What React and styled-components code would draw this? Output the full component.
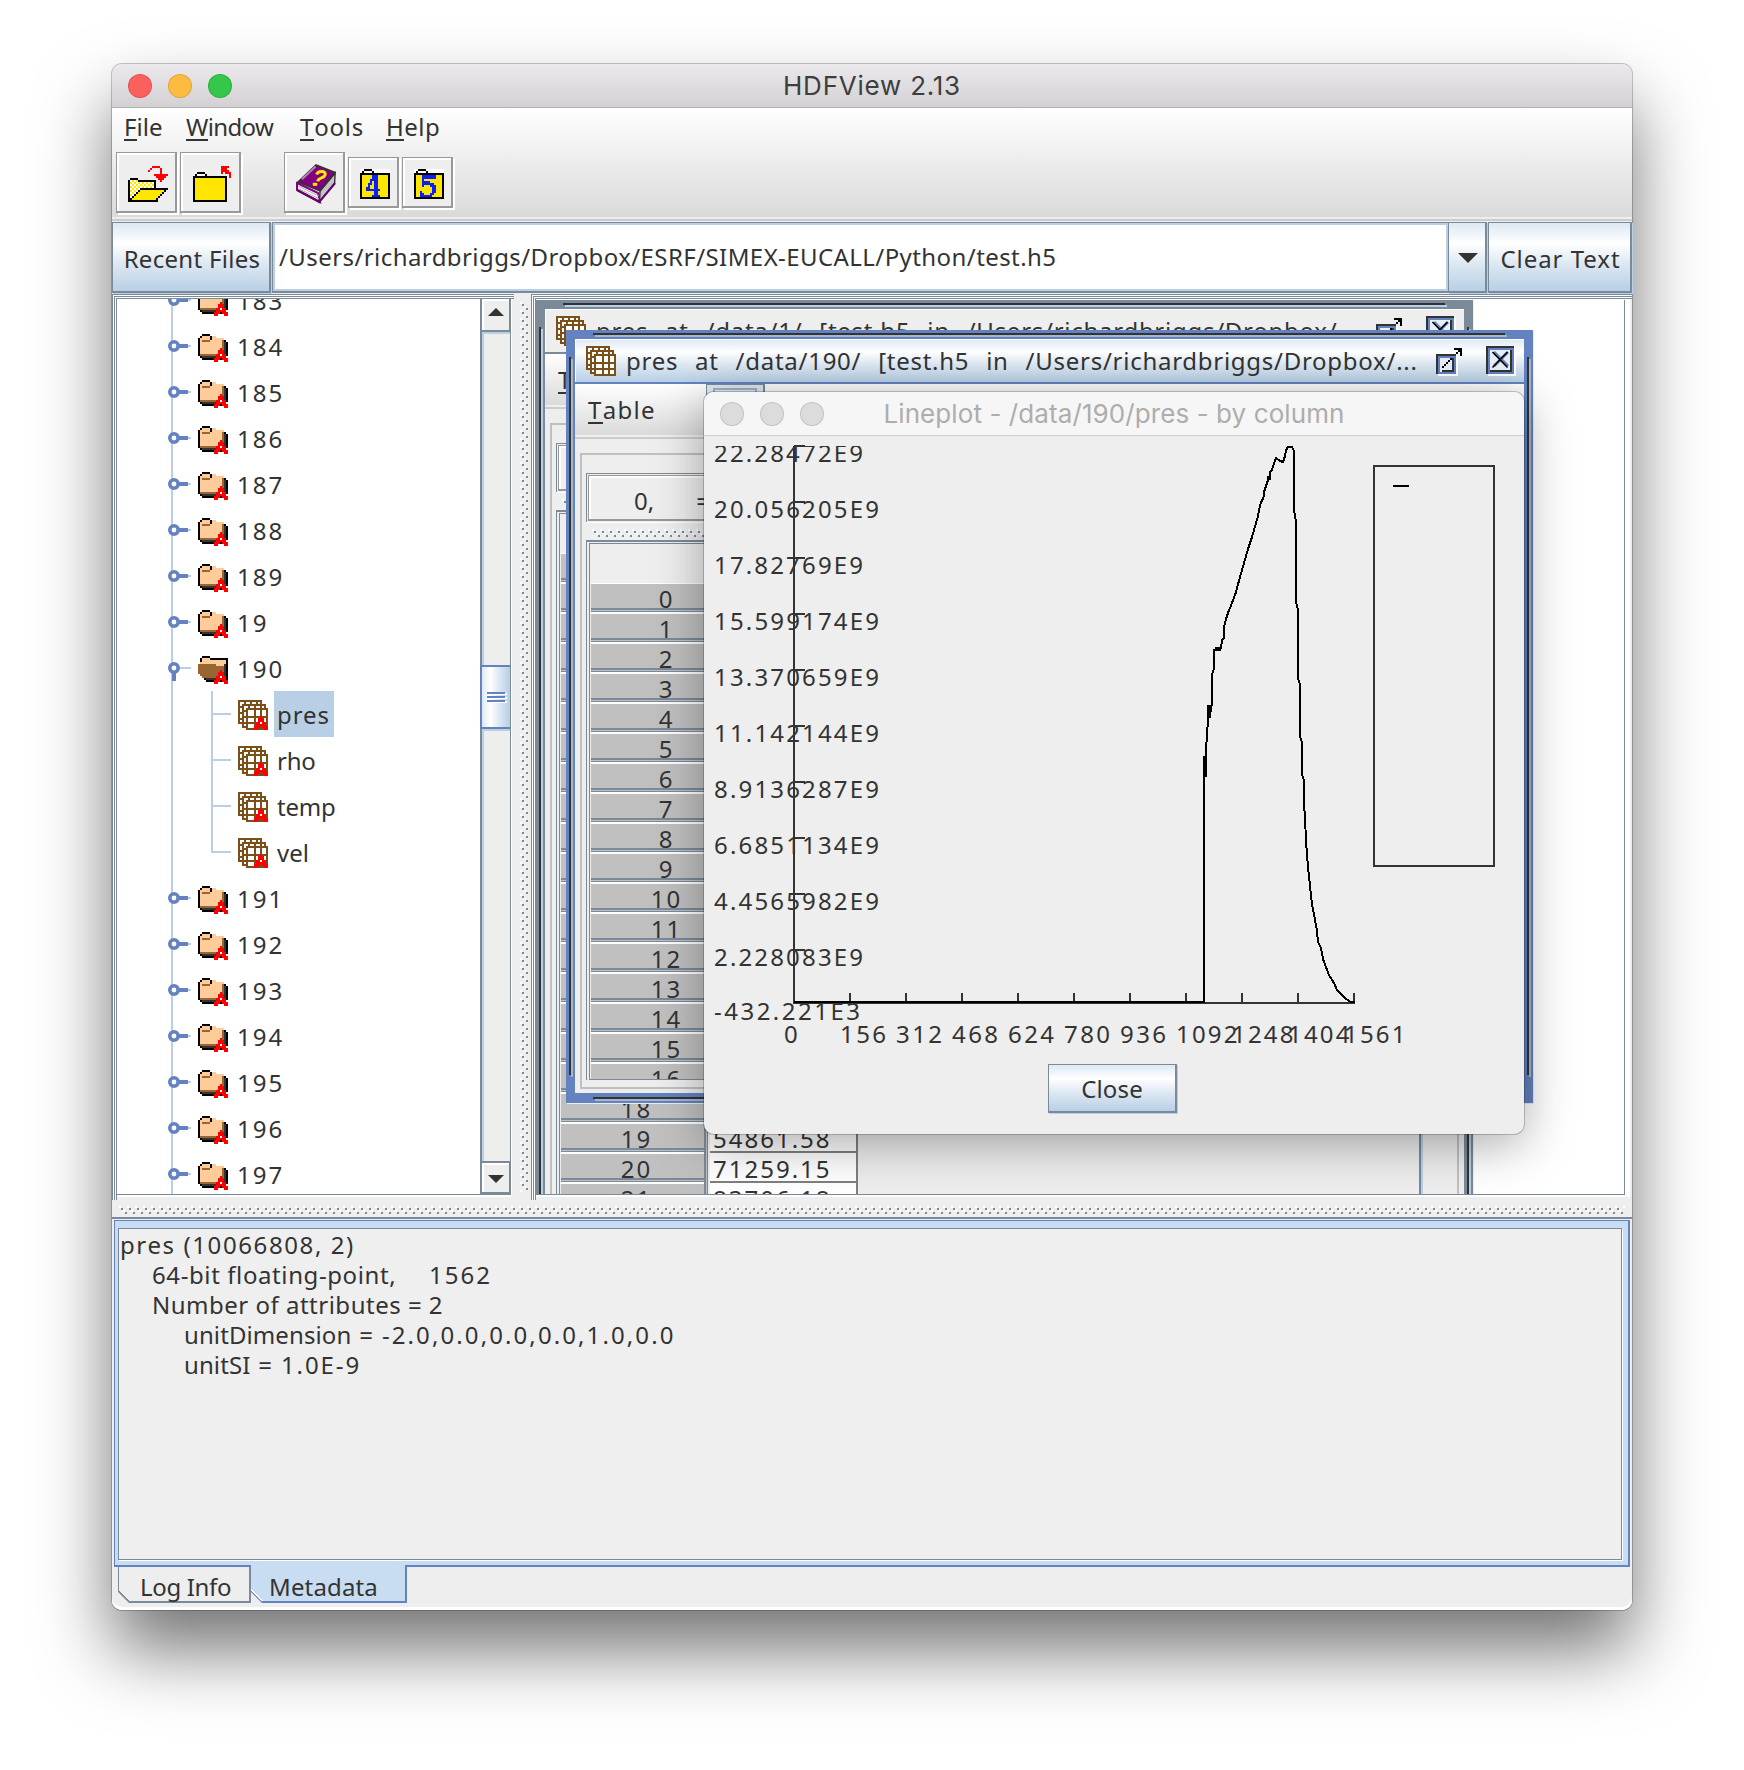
import React from "react";
import styled, { createGlobalStyle, css } from "styled-components";

const GRAY = "#7a8a99";
const BLUE = "#6382bf";
const LIGHT = "#b8cfe5";
const INK = "#333333";
const DIGITS = 2;

const Global = createGlobalStyle`
  body { margin: 0; background: #fff; }
  * { box-sizing: border-box; }
`;

const Text = styled.span`
  white-space: pre;
  letter-spacing: ${(p) => p.$ls || 0}px;
  word-spacing: ${(p) => p.$ws || 0}px;
`;
const Mnemonic = styled.span`
  display: inline-block;
  line-height: 28px;
  box-shadow: inset 0 -2px 0 ${INK};
`;
function Underlined({ ls, children }) {
  return (
    <Text $ls={ls}>
      <Mnemonic>{children[0]}</Mnemonic>
      {children.slice(1)}
    </Text>
  );
}

const Page = styled.div`
  width: 1744px;
  height: 1770px;
  padding: 64px 112px 0;
  overflow: hidden;
  font-family: "Noto Sans", sans-serif;
  font-size: 24px;
  color: ${INK};
`;
const Window = styled.div`
  position: relative;
  width: 1520px;
  height: 1546px;
  display: flex;
  flex-direction: column;
  border-radius: 10px;
  background: #eee;
  box-shadow: 0 0 0 1px rgba(0, 0, 0, 0.22), 0 40px 72px rgba(0, 0, 0, 0.55);
`;
const TitleBar = styled.div`
  height: 44px;
  flex: none;
  display: grid;
  grid-template-columns: 110px 1fr 110px;
  align-items: center;
  padding: 0 16px;
  border-radius: 10px 10px 0 0;
  border-bottom: 1px solid ${(p) => (p.$active ? "#b4b0b4" : "#d0d0d0")};
  background: ${(p) => (p.$active ? "linear-gradient(#ebe9eb, #d3d1d3)" : "#f6f6f6")};
  color: ${(p) => (p.$active ? "#3e3e3e" : "#adadad")};
  font-family: Inter, "Liberation Sans", sans-serif;
  font-size: 26px;
  line-height: 44px;
  text-align: center;
`;
const Lights = styled.div`
  display: flex;
  gap: 16px;
`;
const Light = styled.i`
  width: 24px;
  height: 24px;
  border-radius: 50%;
  background: ${(p) => p.$c};
  border: 1px solid rgba(0, 0, 0, 0.12);
`;

const Head = styled.div`
  height: 114px;
  flex: none;
  background: linear-gradient(#fff, #dadada 109px, #eee 109px, #eee 111px, #ccc 111px, #ccc 113px, #eee 113px);
`;
const Menu = styled.div`
  display: flex;
  line-height: 38px;
  height: 38px;
  padding-left: 12px;
`;
const MenuItem = styled.div`
  width: ${(p) => p.$w}px;
`;
const Tools = styled.div`
  display: flex;
  align-items: center;
  height: 61px;
  margin: 6px 0 0 4px;
  gap: 3px;
`;
const ToolButton = styled.div`
  width: ${(p) => p.$s}px;
  height: ${(p) => p.$s}px;
  margin-left: ${(p) => p.$ml || 0}px;
  padding: 4px 0 0 4px;
  display: flex;
  align-items: center;
  justify-content: center;
  background: #eee;
  border: solid #999;
  border-width: 1px 2px 2px 1px;
  box-shadow: inset 2px 2px 0 #fff, 2px 2px 0 #fff;
`;

const metal = css`
  background: linear-gradient(#dde8f3, #fff 30%, #dde8f3 60%, ${LIGHT});
  border: solid ${GRAY};
  border-width: 1px 2px 2px 1px;
  box-shadow: 1px 1px 0 ${LIGHT};
`;
const PathRow = styled.div`
  display: flex;
  height: 72px;
  flex: none;
  gap: 1px;
`;
const MetalButton = styled.div`
  ${metal}
  width: ${(p) => p.$w}px;
  height: ${(p) => p.$h}px;
  margin-right: ${(p) => p.$mr || 0}px;
  flex: none;
  display: flex;
  align-items: center;
  justify-content: center;
  padding: ${(p) => p.$pt || 0}px 0 0 ${(p) => p.$pl || 0}px;
`;
const PathField = styled.div`
  flex: 1;
  height: 71px;
  margin-right: -1px;
  padding: 0 6px;
  background: #fff;
  border: solid ${GRAY};
  border-width: 1px 0 2px 1px;
  box-shadow: inset 2px 2px 0 ${LIGHT}, inset -2px -2px 0 ${LIGHT};
  line-height: 68px;
`;

const Split = styled.div`
  display: flex;
  height: 906px;
  flex: none;
`;
const nest = css`
  box-shadow: inset 1px 1px 0 ${GRAY}, inset 2px 2px 0 #fff, inset 3px 3px 0 ${GRAY}, inset 4px 4px 0 #fff,
    inset 5px 5px 0 ${GRAY}, inset -2px -3px 0 #eee;
`;
const TreePanel = styled.div`
  ${nest}
  width: 402px;
  padding: 5px 3px 5px 5px;
  background: #fff;
`;
const TreeInner = styled.div`
  display: flex;
  height: 896px;
  border: solid ${GRAY};
  border-width: 0 1px 1px 0;
`;
const TreeView = styled.div`
  flex: 1;
  overflow: hidden;
`;
const TreeList = styled.div`
  margin-top: -22px;
`;
const TreeRow = styled.div`
  display: flex;
  align-items: center;
  height: 46px;
  line-height: 48px;
  padding-left: ${(p) => (p.$child ? 96 : 51)}px;
  background: linear-gradient(${LIGHT}, ${LIGHT}) 54px 0 / 2px 100% no-repeat
    ${(p) => p.$child && `, linear-gradient(${LIGHT}, ${LIGHT}) 94px 0 / 2px ${p.$last ? "24px" : "100%"} no-repeat`};
`;
const Twig = styled.i`
  width: 18px;
  height: 2px;
  margin-right: 7px;
  background: ${LIGHT};
`;
const RowLabel = styled.span`
  height: 46px;
  margin-left: 6px;
  padding: 0 3px;
  background: ${(p) => (p.$on ? LIGHT : "transparent")};
  min-width: 60px;
`;
const IconBox = styled.span`
  display: flex;
  margin-left: ${(p) => p.$ml || 0}px;
  padding-top: ${(p) => p.$pt || 0}px;
`;

const Bar = styled.div`
  width: 30px;
  flex: none;
  display: flex;
  flex-direction: column;
  border-left: 2px solid ${GRAY};
  box-shadow: inset 2px 0 0 ${LIGHT};
  background: #eee;
`;
const BarButton = styled.div`
  height: 33px;
  display: flex;
  align-items: center;
  justify-content: center;
  padding: ${(p) => (p.$down ? "3px 0 0" : "0 0 4px")};
  border: solid ${GRAY};
  border-width: ${(p) => (p.$down ? "2px 1px 2px 0" : "0 1px 2px 0")};
  box-shadow: inset 2px 2px 0 #fff;
  background: #eee;
`;
const BarGap = styled.div`
  height: ${(p) => p.$h}px;
  box-shadow: inset 0 2px 0 ${LIGHT};
`;
const Thumb = styled.div`
  height: 64px;
  margin-left: -2px;
  display: flex;
  flex-direction: column;
  align-items: center;
  justify-content: center;
  gap: 2px;
  border: solid ${BLUE};
  border-width: 2px 0 2px 2px;
  background: linear-gradient(90deg, #dde8f3, #fff 30%, #dde8f3 60%, ${LIGHT});
`;
const Grip = styled.i`
  width: 18px;
  height: 2px;
  background: ${BLUE};
  box-shadow: 2px 1px 0 #fff;
`;
const VSplit = styled.div`
  width: 17px;
  padding: 8px 0 6px 6px;
`;
const HSplit = styled.div`
  height: ${(p) => p.$h}px;
  padding: ${(p) => p.$pad};
  flex: none;
`;

const Desktop = styled.div`
  ${nest}
  flex: 1;
  padding: 6px 7px 5px 5px;
  background: #fff;
`;
const Canvas = styled.div`
  position: relative;
  height: 895px;
  overflow: hidden;
  border: solid ${GRAY};
  border-width: 0 1px 1px 0;
`;
const FrameBox = styled.div`
  position: absolute;
  left: ${(p) => p.$x}px;
  top: ${(p) => p.$y}px;
  width: ${(p) => p.$w}px;
  height: ${(p) => p.$h}px;
  padding: 9px 9px 10px;
  --d: linear-gradient(${INK}, ${INK});
  --l: linear-gradient(${(p) => (p.$active ? "#a3b8cc, #a3b8cc" : `${LIGHT}, ${LIGHT}`)});
  --n: calc(100% - 55px);
  background: var(--d) left 27px top 3px / var(--n) 2px no-repeat, var(--l) left 29px top 5px / var(--n) 2px no-repeat,
    var(--d) left 3px top 27px / 2px var(--n) no-repeat, var(--l) left 5px top 29px / 2px var(--n) no-repeat,
    var(--d) right 4px top 27px / 2px var(--n) no-repeat, var(--l) right 2px top 29px / 2px var(--n) no-repeat,
    var(--d) left 27px bottom 4px / var(--n) 2px no-repeat, var(--l) left 29px bottom 2px / var(--n) 2px no-repeat,
    linear-gradient(${(p) => (p.$active ? `${BLUE}, ${BLUE}` : `${GRAY}, ${GRAY}`)});
  box-shadow: 1px 1px 0 #eee;
`;
const FrameInner = styled.div`
  display: flex;
  flex-direction: column;
  height: 100%;
  background: #eee;
`;
const FrameTitle = styled.div`
  height: 45px;
  flex: none;
  display: flex;
  align-items: center;
  padding: 0 8px 0 11px;
  border-bottom: 2px solid ${(p) => (p.$active ? BLUE : GRAY)};
  background: ${(p) => (p.$active ? `linear-gradient(#dde8f3, #fff 30%, #dde8f3 60%, ${LIGHT})` : "#eee")};
  box-shadow: inset 1px 1px 0 #fff, 0 1px 0 ${LIGHT};
`;
const FrameName = styled.span`
  flex: 1;
  margin-left: 10px;
  line-height: 40px;
`;
const FrameMenu = styled.div`
  height: 56px;
  flex: none;
  display: flex;
  padding-left: 13px;
  line-height: 51px;
  background: linear-gradient(#fff, #dadada 51px, #eee 51px, #eee 53px, #ccc 53px, #ccc 55px, #eee 55px);
`;
const ChartTool = styled.div`
  width: 59px;
  height: 50px;
  margin-left: 50px;
  padding: 3px 6px;
  border: solid ${GRAY};
  border-width: 1px 2px 2px 1px;
  background: #dde8f3;
  &::before {
    content: "";
    display: block;
    height: 40px;
    border: 2px solid #9fb0c6;
  }
`;
const FrameBody = styled.div`
  flex: 1;
  min-height: 0;
  padding: 13px 5px 4px;
`;
const Group = styled.div`
  display: flex;
  flex-direction: column;
  height: 100%;
  padding: 18px 8px 7px 4px;
  border: 2px solid #c0c0c0;
`;
const CellBox = styled.div`
  height: 49px;
  flex: none;
  padding: 1px;
  border: solid ${GRAY};
  border-width: 1px 0 0 1px;
  box-shadow: 0 1px 0 #fff;
`;
const CellInner = styled.div`
  height: 46px;
  padding-left: 45px;
  line-height: 49px;
  border: solid #999;
  border-width: 1px 1px 2px 1px;
  box-shadow: inset 2px 2px 0 #fff;
  display: flex;
`;
const CellEq = styled.span`
  margin-left: 42px;
`;
const TableBox = styled.div`
  flex: 1;
  min-height: 0;
  display: flex;
  padding: 1px 0 0 2px;
  border: solid ${GRAY};
  border-width: 2px 0 0 1px;
`;
const TableView = styled.div`
  flex: 1;
  display: flex;
  overflow: hidden;
  border: solid ${GRAY};
  border-width: 1px 0 1px 1px;
`;
const RowHead = styled.div`
  width: 148px;
  padding-top: 39px;
`;
const HeadCell = styled.div`
  height: 30px;
  line-height: 32px;
  text-align: center;
  margin-left: 1px;
  padding-left: 4px;
  background: linear-gradient(
    #fff 1px, #c0c0c0 1px, #c0c0c0 25px, ${GRAY} 25px, ${GRAY} 27px,
    #c0c0c0 27px, #c0c0c0 28px, ${GRAY} 28px, ${GRAY} 29px, #fff 29px
  );
  box-shadow: inset -1px 0 0 ${GRAY}, inset -2px 0 0 #c0c0c0, inset -4px 0 0 ${GRAY};
`;
const DataCol = styled.div`
  width: 150px;
  padding-top: ${(p) => 39 + 30 * p.$skip}px;
`;
const DataCell = styled.div`
  height: 30px;
  line-height: 32px;
  padding-left: 3px;
  margin-left: 2px;
  background: #fff;
  border: solid #7f7f7f;
  border-width: 0 2px 2px 0;
`;

const Tabs = styled.div`
  flex: 1;
  display: flex;
  flex-direction: column;
  border-top: 2px solid ${GRAY};
  padding: 1px 2px 3px;
  box-shadow: inset 0 -3px 0 #fff;
  border-radius: 0 0 10px 10px;
  background: #eee;
`;
const TabPane = styled.div`
  height: 347px;
  flex: none;
  padding: 7px 6px 4px 3px;
  background: #c8ddf2;
  border: solid ${BLUE};
  border-width: 1px 2px 2px 1px;
`;
const MetaText = styled.div`
  height: 332px;
  padding: 1px 1px 0;
  background: #efefef;
  border: 1px solid ${GRAY};
  box-shadow: 1px 1px 0 #fff;
  line-height: 30px;
`;
const Line = styled.div`
  height: 30px;
  padding-left: ${(p) => p.$in * 32}px;
`;
const Value = styled(Text)`
  margin-left: ${(p) => p.$ml}px;
`;
const TabRow = styled.div`
  display: flex;
  padding-left: 4px;
`;
const Tab = styled.div`
  width: ${(p) => p.$w}px;
  height: ${(p) => (p.$on ? 38 : 36)}px;
  line-height: 40px;
  margin-top: ${(p) => (p.$on ? -2 : 0)}px;
  padding: ${(p) => (p.$on ? 2 : 0)}px 0 0 ${(p) => p.$pl}px;
  clip-path: polygon(0 0, 100% 0, 100% 100%, 11px 100%, 0 calc(100% - 11px));
  border: solid ${(p) => (p.$on ? BLUE : GRAY)};
  border-width: 0 2px 2px ${(p) => (p.$on ? 0 : 1)}px;
  background: linear-gradient(
    45deg,
    ${(p) => (p.$on ? BLUE : GRAY)} 7.3px,
    ${(p) => (p.$on ? "#fff 7.4px, #fff 9px, #c8ddf2 9px" : "#eee 7.4px")}
  );
`;

const Plot = styled.div`
  position: absolute;
  left: 592px;
  top: 328px;
  width: 820px;
  height: 742px;
  display: flex;
  flex-direction: column;
  align-items: center;
  border-radius: 10px;
  background: #eee;
  box-shadow: 0 0 0 1px rgba(0, 0, 0, 0.2), 0 10px 50px rgba(0, 0, 0, 0.34);
  ${TitleBar} {
    width: 100%;
  }
`;
const ChartSvg = styled.svg`
  display: block;
  flex: none;
`;

const PAL = {
  K: "#000", p: "#ffcc99", b: "#996633", d: "#333", r: "#f00", w: "#fff", y: "#ffe600", B: "#0a1eff",
};
function Cells({ rows, dx = 0, dy = 0 }) {
  return rows.map((row, y) =>
    [...row].map(
      (ch, x) => PAL[ch] && <rect key={`${x}-${y}`} x={x + dx} y={y + dy} width="1" height="1" fill={PAL[ch]} />
    )
  );
}
function Pixels({ rows, attr }) {
  const w = rows[0].length;
  const h = rows.length;
  return (
    <svg width={w * 2} height={h * 2} viewBox={`0 0 ${w} ${h}`} shapeRendering="crispEdges">
      <Cells rows={rows} />
      {attr && <Cells rows={ATTR} dx={8} dy={7} />}
    </svg>
  );
}
const ATTR = ["...r...", "..rrr..", "..rrr..", ".rrwrr.", ".rrrrr.", "rrr.rrr", "rr...rr"];
const CLOSED = [
  "..KKKK.........", ".KppppKpp......", "KpppppKpppppp..", "KpbbbbppppppbK.", "KpppppppppppbdK", "KpppppppppppbdK",
  "KpppppppppppbdK", "KpppppppppppbdK", "KpppppppppppbdK", "KpppppppppppbdK", "KbbbbbbbbbbbddK", ".KdddddddddddK.",
  "..KKKKKKKKKKK..", "...............",
];
const OPENED = [
  "..KKKK.........", ".KppppKKKKKKKKK", ".KppppppppppppK", ".pppppppppppppK", "bbbbbbbbbppppdK", "bbbbbbbbbbbbbdK",
  "bbbbbbbbbbbbbdK", "bbbbbbbbbbbbbdK", "bbbbbbbbbbbbbdK", ".bbbbbbbbbbbbdK", "..bbbbbbbbbbddK", "...KddddddddddK",
  "....KKKKKKKKKKK", "...............",
];
const OPENFILE = [
  "............rrrr....", "...........r....r...", "..........r.....r...", "................r...", ".............rrrrrrr",
  "..............rrrrr.", ".KKKK..........rrr..", "KwywyKKKKKKKKK..r...", "KywywywywywywK......", "KwywywywywywyK......",
  "KywywywywywywK......", "KwywywKKKKKKKKKKKKKK", "KywywKyyyyyyyyyyyyK.", "KwywKyyyyyyyyyyyyK..", "KywKyyyyyyyyyyyyK...",
  "KwKyyyyyyyyyyyyK....", "KKyyyyyyyyyyyyK.....", "KKKKKKKKKKKKKKK.....",
];
const CLOSEFILE = [
  "..............rrrr.", "..............rrr..", "..............rrrr.", "..KKKK........r.rrr", ".KwwwwK...........r",
  "KKKKKKKKKKKKKKKKK.r", ...Array(11).fill("KyyyyyyyyyyyyyyyK.."), "KKKKKKKKKKKKKKKKK..",
];
const folder = (digit) => {
  const base = ["wwKKKKwwwwwwwww", "wKwwwwKwwwwwwww", "KKKKKKKKKKKKKKK", ...Array(11).fill("KyyyyyyyyyyyyyK"), "KKKKKKKKKKKKKKK"];
  return base.map((r, y) => [...r].map((c, x) => (digit[y - 3] && digit[y - 3][x] === "#" ? "B" : c)).join(""));
};
const FOUR = folder([
  "......###", "......###", ".....####", ".....#.##", "....##.##", "....#..##", "...##..##", "...#######", ".......##", ".......##", "......####",
]);
const FIVE = folder([
  "....#######", "....#######", "....#", "....####", "....######", "....#...###", ".........##", ".........##", "...#.....##", "...##...##", "...######",
]);

function Book() {
  return (
    <svg width="40" height="40" viewBox="0 0 20 20">
      <path d="M.5 9.5 11 14.5 12 19 .5 13z" fill="#fff" stroke="#80007f" strokeWidth="1" />
      <path d="M1 11 11.5 16M1.5 12.4 11.5 17.4" stroke="#aaa" strokeWidth=".5" />
      <path d="M12 13.5 19.6 4.5 19.3 9.5 11.8 18.8z" fill="#c4c4c4" stroke="#333" strokeWidth=".7" />
      <path d="M.5 13 11.6 19 19.6 9.6" fill="none" stroke="#66006a" strokeWidth="1" />
      <path d="M1 9 10 .5 19.5 4.2 12 13.4z" fill="#800080" stroke="#333" strokeWidth=".8" />
      <path d="M3 7.6 9.8 1.2" stroke="#b080b0" strokeWidth="1" />
      <path d="M10.3 5.2C11 3.2 15.2 3.2 14.6 5.4 14 7.3 11.4 6.6 10.8 8.6" fill="none" stroke="#ffe600" strokeWidth="1.5" />
      <path d="M8.4 9.4h2.2v1.5H8.4z" fill="#ffe600" />
    </svg>
  );
}
function GridLayer({ from, to, lines }) {
  const n = to - from + 1;
  return (
    <g fill="#7b4f18">
      <rect x={from} y={from} width={n} height={n} fill="#fff" />
      {lines.map((v) => (
        <g key={v}>
          <rect x={v} y={from} width="1" height={n} />
          <rect x={from} y={v} width={n} height="1" />
        </g>
      ))}
    </g>
  );
}
function Grid({ attr }) {
  return (
    <svg width="30" height="30" viewBox="0 0 15 15" shapeRendering="crispEdges">
      <GridLayer from={0} to={11} lines={[0, 3, 6, 9, 11]} />
      <GridLayer from={2} to={13} lines={[2, 5, 8, 11, 13]} />
      <GridLayer from={4} to={14} lines={[4, 8, 11, 14]} />
      {attr && <Cells rows={ATTR} dx={8} dy={8} />}
    </svg>
  );
}
function Handle({ open }) {
  return (
    <svg width="24" height="28" viewBox="0 0 24 28">
      <path d="M12 13h11v2H12z" fill={LIGHT} />
      <path d={open ? "M4 16h4v11H4z" : "M10 12h10v4H10z"} fill={BLUE} />
      <circle cx="6" cy="14" r="4.2" fill="#fff" stroke={BLUE} strokeWidth="3.6" />
    </svg>
  );
}
const Arrow = ({ up, w = 16, h = 8 }) => (
  <svg width={w} height={h} viewBox="0 0 16 8" preserveAspectRatio="none">
    <path d={up ? "M8 0 16 8H0z" : "M0 0h16L8 8z"} fill={INK} />
  </svg>
);
const BumpSvg = styled.svg`
  display: block;
`;
function Bumps({ w, h }) {
  const id = `bumps${w}x${h}`;
  return (
    <BumpSvg width={w} height={h} shapeRendering="crispEdges">
      <pattern id={id} width="8" height="8" patternUnits="userSpaceOnUse">
        <path d="M0 0h2v2H0zM4 4h2v2H4z" fill="#fff" />
        <path d="M2 2h2v2H2zM6 6h2v2H6z" fill={GRAY} />
      </pattern>
      <rect width={w} height={h} fill={`url(#${id})`} />
    </BumpSvg>
  );
}
const ButtonsSvg = styled.svg`
  margin-top: 3px;
`;
function FrameButtons() {
  return (
    <ButtonsSvg width="80" height="32" viewBox="0 0 80 32" shapeRendering="crispEdges">
      <path d="M2 10h20v20H2z" fill="#fff" />
      <path d="M0 8h20v20H0z" fill={BLUE} />
      <path d="M0 8h20v2H0zM0 8h2v20H0z" fill={INK} />
      <path d="M4 12h14v14H4z" fill="#e8eff7" />
      <path d="M6 24h12v2H6zM16 12h2v14h-2z" fill={INK} />
      <path d="M6 22h2v-2h2v-2h2v-2h2v-2h2v-2h-2v2h-2v2h-2v2H8v2H6z" fill="#000" />
      <path d="M18 2h8v8h-2V6h-2v2h-2V6h2V4h-4z" fill="#000" />
      <path d="M52 2h28v28H52z" fill="#fff" />
      <path d="M50 0h28v28H50z" fill={BLUE} />
      <path d="M50 0h28v2H50zM50 0h2v28h-2z" fill={INK} />
      <path d="M54 4h22v20H54z" fill="#e8eff7" />
      <path d="M54 24h22v2H54zM74 4h2v22h-2z" fill={INK} />
      <g shapeRendering="auto" fill="none">
        <path d="M58 6 72 20M72 6 58 20" stroke={BLUE} strokeWidth="3" />
        <path d="M56.5 6 71.5 21.5M71.5 6 56.5 21.5" stroke="#000" strokeWidth="1.6" />
      </g>
    </ButtonsSvg>
  );
}

function Frame({ x, y, w, h, active, title, labels, cells, skip }) {
  return (
    <FrameBox $x={x} $y={y} $w={w} $h={h} $active={active}>
      <FrameInner>
        <FrameTitle $active={active}>
          <Grid />
          <FrameName>
            <Text $ls={0.73} $ws={1.5}>{title}</Text>
          </FrameName>
          <FrameButtons />
        </FrameTitle>
        <FrameMenu>
          <Underlined ls={1.3}>Table</Underlined>
          {active && <ChartTool />}
        </FrameMenu>
        <FrameBody>
          <Group>
            <CellBox>
              <CellInner>
                {active && (
                  <>
                    <span>0,</span>
                    <CellEq>=</CellEq>
                  </>
                )}
              </CellInner>
            </CellBox>
            <HSplit $h={18} $pad="7px 0 0 6px">
              <Bumps w={w - 60} h={8} />
            </HSplit>
            <TableBox>
              <TableView>
                <RowHead>
                  {labels.map((l, i) => (
                    <HeadCell key={i}>{l && <Text $ls={DIGITS}>{l}</Text>}</HeadCell>
                  ))}
                </RowHead>
                {cells && (
                  <DataCol $skip={skip}>
                    {cells.map((c) => (
                      <DataCell key={c}>
                        <Text $ls={DIGITS}>{c}</Text>
                      </DataCell>
                    ))}
                  </DataCol>
                )}
              </TableView>
              <Bar />
            </TableBox>
          </Group>
        </FrameBody>
      </FrameInner>
    </FrameBox>
  );
}

const CURVE =
  "794,1002 1204,1002 1204,757 1205,757 1205,776 1206,776 1206,750 1207,734 1208,720 1208,706 1209,706 1210,718 1211,706 1212,705 1212,675 1214,668 1214,650 1220,650 1220,648 1215,648 1221,648 1222,640 1224,638 1224,627 1226,619 1228,613 1232,603 1236,592 1240,577 1244,563 1248,549 1252,537 1256,523 1258,516 1260,505 1264,496 1264,492 1268,480 1268,476 1270,480 1270,472 1272,470 1274,463 1276,458 1280,461 1283,462 1285,456 1286,450 1288,447 1292,447 1294,451 1294,510 1296,522 1296,602 1298,610 1298,678 1300,685 1300,737 1302,742 1302,775 1304,780 1304,806 1305,816 1306,842 1308,867 1310,886 1312,904 1315,920 1317,931 1318,942 1321,948 1323,959 1326,967 1329,975 1334,983 1337,990 1341,994 1346,999 1351,1002 1355,1002";
const YL = ["22.28472E9", "20.056205E9", "17.82769E9", "15.599174E9", "13.370659E9", "11.142144E9", "8.9136287E9", "6.6851134E9", "4.4565982E9", "2.228083E9"];
const XL = ["0", "156", "312", "468", "624", "780", "936", "1092", "1248", "1404", "1561"];
function Chart() {
  return (
    <ChartSvg width="820" height="628" viewBox="704 436 820 628">
      <clipPath id="plotArea">
        <rect x="704" y="446" width="820" height="618" />
      </clipPath>
      <g clipPath="url(#plotArea)" fill={INK}>
        {YL.map((t, i) => (
          <text key={t} x="714" y={462 + 56 * i} textLength={t.length * 16 - 11} fontSize="24">{t}</text>
        ))}
        <text x="714" y="1020" textLength="146" fontSize="24">-432.221E3</text>
        {XL.map((t, i) => (
          <text key={t} x={784 + 56 * i} y="1043" textLength={t.length * 15.5 - 0.5} fontSize="24">{t}</text>
        ))}
      </g>
      <g stroke={INK} strokeWidth="2" fill="none" shapeRendering="crispEdges">
        <path d="M794 446V1003H1355" />
        {XL.slice(1).map((t, i) => <path key={t} d={`M${850 + 56 * i} 993V1003`} />)}
        {YL.map((t, i) => <path key={t} d={`M794 ${446 + 56 * i}H805`} />)}
        <path d="M1374 466H1494V866H1374z" />
        <path d="M1393 486H1409" stroke="#000" />
        <polyline points={CURVE} stroke="#000" />
      </g>
    </ChartSvg>
  );
}

const TREE = [
  ["183"], ["184"], ["185"], ["186"], ["187"], ["188"], ["189"], ["19"], ["190", "open"], ["pres", "child"], ["rho", "child"],
  ["temp", "child"], ["vel", "last"], ["191"], ["192"], ["193"], ["194"], ["195"], ["196"], ["197"],
];
const CHILD_SPACING = { pres: 0.9, rho: -0.2, temp: -0.2, vel: 0 };

function Tree() {
  return (
    <TreeList>
      {TREE.map(([name, kind]) => {
        const child = kind === "child" || kind === "last";
        return (
          <TreeRow key={name} $child={child} $last={kind === "last"}>
            {child ? <Twig /> : <Handle open={kind === "open"} />}
            <IconBox $ml={child ? 0 : 6} $pt={child ? 2 : 4}>
              {child ? <Grid attr /> : <Pixels rows={kind ? OPENED : CLOSED} attr />}
            </IconBox>
            <RowLabel $on={name === "pres"}>
              <Text $ls={child ? CHILD_SPACING[name] : DIGITS}>{name}</Text>
            </RowLabel>
          </TreeRow>
        );
      })}
    </TreeList>
  );
}

export default function App() {
  return (
    <>
      <Global />
      <Page>
        <Window>
          <TitleBar $active>
            <Lights>
              <Light $c="#fc605c" />
              <Light $c="#fdbc40" />
              <Light $c="#34c749" />
            </Lights>
            <Text $ls={0.77}>HDFView 2.13</Text>
          </TitleBar>
          <Head>
            <Menu>
              <MenuItem $w={62}><Underlined ls={0.05}>File</Underlined></MenuItem>
              <MenuItem $w={114}><Underlined ls={-0.63}>Window</Underlined></MenuItem>
              <MenuItem $w={86}><Underlined ls={0.78}>Tools</Underlined></MenuItem>
              <MenuItem $w={86}><Underlined ls={0.5}>Help</Underlined></MenuItem>
            </Menu>
            <Tools>
              <ToolButton $s={61}><Pixels rows={OPENFILE} /></ToolButton>
              <ToolButton $s={61}><Pixels rows={CLOSEFILE} /></ToolButton>
              <ToolButton $s={61} $ml={40}><Book /></ToolButton>
              <ToolButton $s={51}><Pixels rows={FOUR} /></ToolButton>
              <ToolButton $s={51}><Pixels rows={FIVE} /></ToolButton>
            </Tools>
          </Head>
          <PathRow>
            <MetalButton $w={159} $h={71} $pt={3} $pl={2}><Text $ls={0.3}>Recent Files</Text></MetalButton>
            <PathField>
              <Text $ls={0.42}>/Users/richardbriggs/Dropbox/ESRF/SIMEX-EUCALL/Python/test.h5</Text>
            </PathField>
            <MetalButton $w={39} $h={71} $pt={2} $pl={1}><Arrow w={20} h={10} /></MetalButton>
            <MetalButton $w={144} $h={71} $pt={3} $pl={2}><Text $ls={0.95}>Clear Text</Text></MetalButton>
          </PathRow>
          <Split>
            <TreePanel>
              <TreeInner>
                <TreeView>
                  <Tree />
                </TreeView>
                <Bar>
                  <BarButton><Arrow up /></BarButton>
                  <BarGap $h={333} />
                  <Thumb>
                    <Grip />
                    <Grip />
                    <Grip />
                  </Thumb>
                  <BarGap $h={433} />
                  <BarButton $down><Arrow /></BarButton>
                </Bar>
              </TreeInner>
            </TreePanel>
            <VSplit>
              <Bumps w={8} h={890} />
            </VSplit>
            <Desktop>
              <Canvas>
                <Frame
                  x={0} y={0} w={937} h={960}
                  title="pres  at  /data/1/  [test.h5  in  /Users/richardbriggs/Dropbox/..."
                  labels={[...Array(18).fill(""), "18", "19", "20", "21"]}
                  skip={19}
                  cells={["54861.58", "71259.15", "83706.18"]}
                />
                <Frame
                  active x={30} y={30} w={967} h={773}
                  title="pres  at  /data/190/  [test.h5  in  /Users/richardbriggs/Dropbox/..."
                  labels={Array.from({ length: 17 }, (_, i) => String(i))}
                />
              </Canvas>
            </Desktop>
          </Split>
          <HSplit $h={17} $pad="6px 0 0 7px">
            <Bumps w={1506} h={8} />
          </HSplit>
          <Tabs>
            <TabPane>
              <MetaText>
                <Line $in={0}><Text $ls={1.6}>pres (10066808, 2)</Text></Line>
                <Line $in={1}>
                  <Text $ls={0.6}>64-bit floating-point,</Text>
                  <Value $ls={DIGITS} $ml={8}>{"   1562"}</Value>
                </Line>
                <Line $in={1}><Text $ls={0.5}>Number of attributes = 2</Text></Line>
                <Line $in={2}>
                  <Text $ls={0.1} $ws={1.5}>{"unitDimension = "}</Text>
                  <Value $ls={2.1} $ml={1}>-2.0,0.0,0.0,0.0,1.0,0.0</Value>
                </Line>
                <Line $in={2}>
                  <Text $ls={0.1} $ws={1.5}>{"unitSI = "}</Text>
                  <Value $ls={1.9} $ml={1}>1.0E-9</Value>
                </Line>
              </MetaText>
            </TabPane>
            <TabRow>
              <Tab $w={133} $pl={21}><Text $ls={-0.33}>Log Info</Text></Tab>
              <Tab $on $w={156} $pl={18}><Text $ls={0.15}>Metadata</Text></Tab>
            </TabRow>
          </Tabs>
          <Plot>
            <TitleBar>
              <Lights>
                <Light $c="#dcdcdc" />
                <Light $c="#dcdcdc" />
                <Light $c="#dcdcdc" />
              </Lights>
              <Text $ls={0.09}>Lineplot - /data/190/pres - by column</Text>
            </TitleBar>
            <Chart />
            <MetalButton $w={129} $h={49} $mr={3}><Text $ls={0.16}>Close</Text></MetalButton>
          </Plot>
        </Window>
      </Page>
    </>
  );
}
